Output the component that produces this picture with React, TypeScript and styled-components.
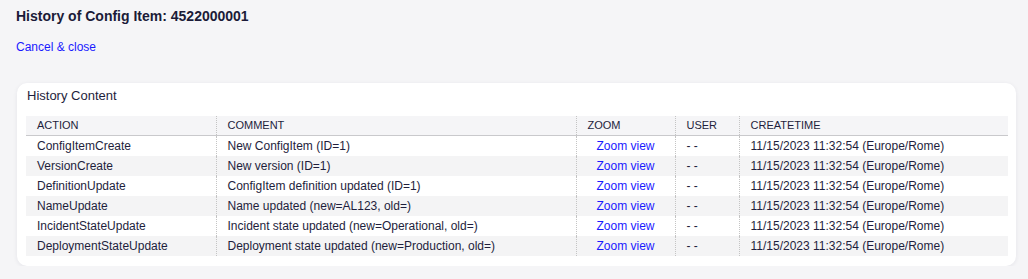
import React from "react";
import styled, { createGlobalStyle } from "styled-components";

const Global = createGlobalStyle`
  html, body { margin: 0; padding: 0; background: #f5f5f7; }
  body { font-family: "Liberation Sans", Arial, sans-serif; color: #1e1e3c; }
`;

const Page = styled.div`
  display: flex;
  flex-direction: column;
  padding-top: 8px;
`;

const Title = styled.h1`
  margin: 0 0 0 16px;
  font-size: 14px;
  line-height: 16px;
  font-weight: bold;
  color: #1b1b38;
`;

const CloseLink = styled.a`
  margin: 16px 0 0 16px;
  font-size: 12px;
  line-height: 14px;
  color: #1a1aff;
  text-decoration: none;
  cursor: pointer;
  align-self: flex-start;
`;

const Card = styled.section`
  margin: 29px 12px 0 17px;
  background: #fff;
  border-radius: 10px;
  box-shadow: 0 1px 4px rgba(40, 40, 80, 0.08);
  padding: 5px 8px 10px 9px;
`;

const CardTitle = styled.h2`
  margin: 0 0 13px 1px;
  font-size: 13px;
  line-height: 15px;
  font-weight: normal;
  color: #1e1e3c;
`;

const Table = styled.table`
  width: 100%;
  border-collapse: collapse;
  table-layout: fixed;
  font-size: 12px;
`;

const Th = styled.th<{ $w?: number }>`
  box-sizing: border-box;
  ${(p) => (p.$w ? `width: ${p.$w}px;` : "")}
  height: 19px;
  padding: 0 0 0 11px;
  text-align: left;
  font-weight: normal;
  font-size: 11px;
  background: #f5f5f7;
  border-bottom: 1px solid #c9c9cc;
  border-left: 1px dotted #c4c4c4;
  &:first-child { border-left: none; }
  color: #1e1e3c;
`;

const Tr = styled.tr`
  &:nth-child(even) td { background: #f4f4f5; }
`;

const Td = styled.td<{ $center?: boolean }>`
  height: 20px;
  padding: 0 0 0 ${(p) => (p.$center ? 0 : 11)}px;
  text-align: ${(p) => (p.$center ? "center" : "left")};
  border-left: 1px dotted #c4c4c4;
  &:first-child { border-left: none; }
  white-space: nowrap;
  color: #1e1e3c;
`;

const ZoomLink = styled.a`
  color: #1a1aff;
  text-decoration: none;
  cursor: pointer;
`;

const rows = [
  ["ConfigItemCreate", "New ConfigItem (ID=1)"],
  ["VersionCreate", "New version (ID=1)"],
  ["DefinitionUpdate", "ConfigItem definition updated (ID=1)"],
  ["NameUpdate", "Name updated (new=AL123, old=)"],
  ["IncidentStateUpdate", "Incident state updated (new=Operational, old=)"],
  ["DeploymentStateUpdate", "Deployment state updated (new=Production, old=)"],
];

export default function App() {
  return (
    <>
      <Global />
      <Page>
        <Title>History of Config Item: 4522000001</Title>
        <CloseLink>Cancel &amp; close</CloseLink>
        <Card>
          <CardTitle>History Content</CardTitle>
          <Table>
            <thead>
              <tr>
                <Th $w={190}>ACTION</Th>
                <Th $w={360}>COMMENT</Th>
                <Th $w={99}>ZOOM</Th>
                <Th $w={64}>USER</Th>
                <Th>CREATETIME</Th>
              </tr>
            </thead>
            <tbody>
              {rows.map(([a, c]) => (
                <Tr key={a}>
                  <Td>{a}</Td>
                  <Td>{c}</Td>
                  <Td $center>
                    <ZoomLink>Zoom view</ZoomLink>
                  </Td>
                  <Td>- -</Td>
                  <Td>11/15/2023 11:32:54 (Europe/Rome)</Td>
                </Tr>
              ))}
            </tbody>
          </Table>
        </Card>
      </Page>
    </>
  );
}
